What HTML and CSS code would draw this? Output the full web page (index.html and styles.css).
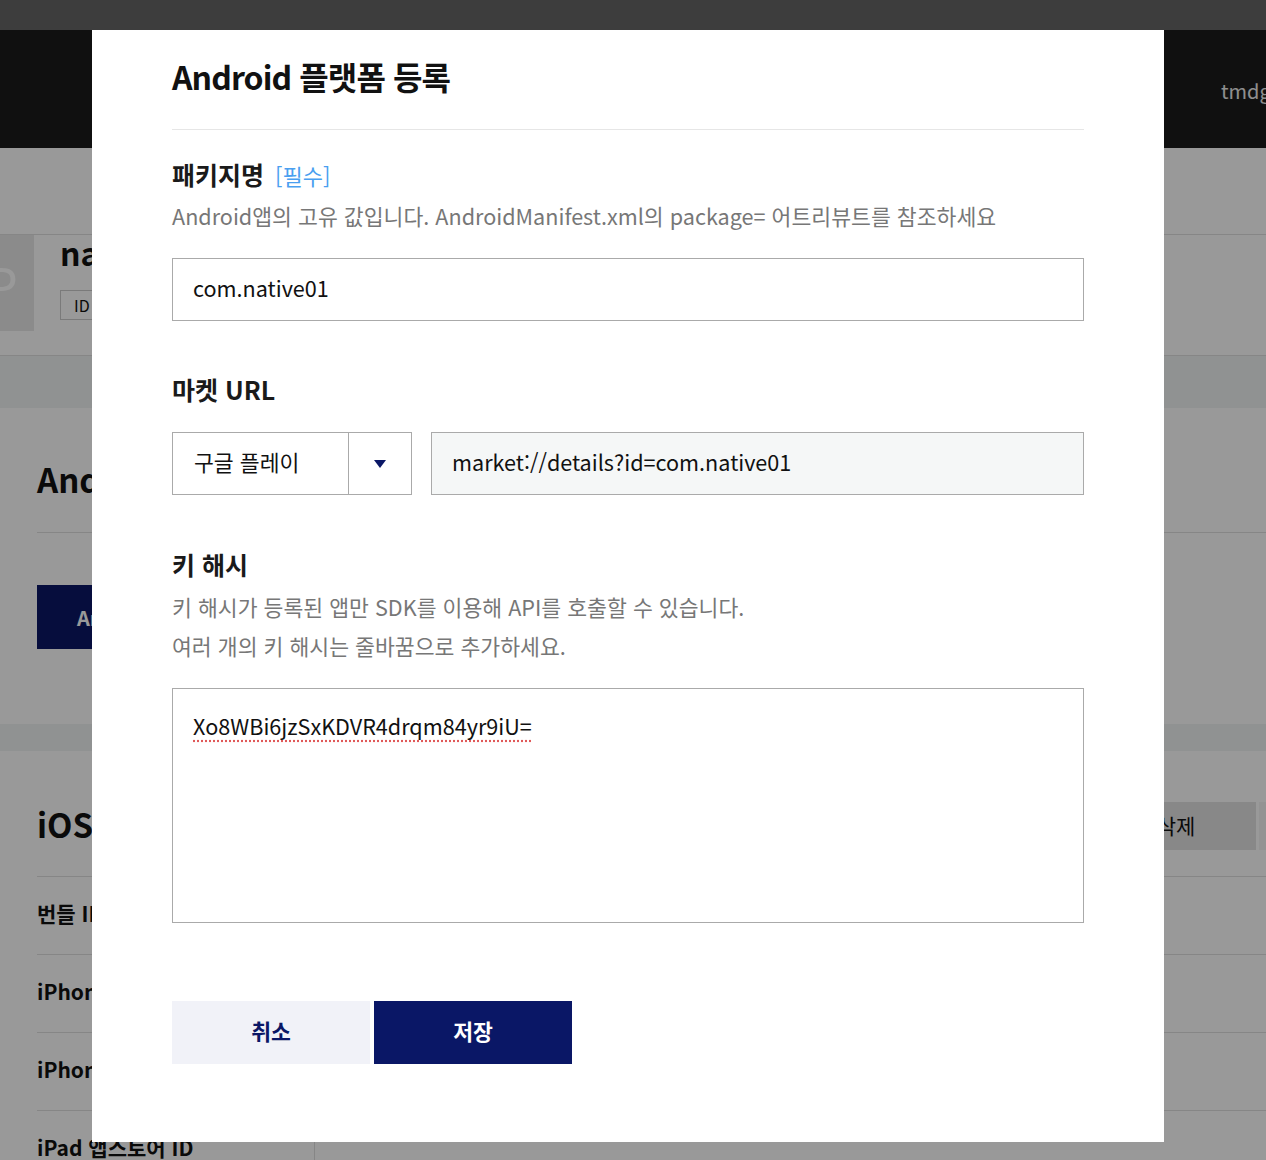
FILE: index.html
```html
<!DOCTYPE html>
<html lang="ko">
  <head>
    <meta charset="utf-8">
    <title>Android 플랫폼 등록</title>
    <link rel="stylesheet" href="styles.css">
  </head>
  <body>

    <div class="page">
      <div class="topstrip"></div>
      <div class="header">
        <span class="user">tmdgus</span>
      </div>

      <div class="app-info">
        <div class="app-icon">P</div>
        <div class="app-text">
          <div class="app-name">native01</div>
          <span class="app-id">ID 123456</span>
        </div>
      </div>
      <div class="band band-tabs"></div>

      <div class="section">
        <h2 class="section-title">Android</h2>
        <button class="btn-navy">Android 플랫폼 등록</button>
      </div>
      <div class="band"></div>

      <div class="section section-ios">
        <div class="section-head">
          <h2 class="section-title">iOS</h2>
          <div class="head-buttons">
            <button class="btn-gray">삭제</button>
            <button class="btn-light">추가</button>
          </div>
        </div>
        <div class="row"><div class="row-label">번들 ID</div><div class="row-value"></div></div>
        <div class="row"><div class="row-label">iPhone 앱스토어 ID</div><div class="row-value"></div></div>
        <div class="row"><div class="row-label">iPhone 팀 ID</div><div class="row-value"></div></div>
        <div class="row"><div class="row-label">iPad 앱스토어 ID</div><div class="row-value"></div></div>
      </div>
    </div>

    <div class="dim"></div>

    <div class="modal">
      <h1 class="modal-title">Android 플랫폼 등록</h1>

      <div class="field field-first">
        <div class="label">패키지명 <span class="required">[필수]</span></div>
        <p class="desc">Android앱의 고유 값입니다. AndroidManifest.xml의 package= 어트리뷰트를 참조하세요</p>
        <input class="text-input" type="text" value="com.native01">
      </div>

      <div class="field">
        <div class="label">마켓 URL</div>
        <div class="market-row">
          <div class="select">
            <span class="select-text">구글 플레이</span>
            <span class="select-arrow"><span class="triangle"></span></span>
          </div>
          <input class="text-input url-input" type="text" value="market://details?id=com.native01" readonly>
        </div>
      </div>

      <div class="field field-hash">
        <div class="label">키 해시</div>
        <p class="desc">키 해시가 등록된 앱만 SDK를 이용해 API를 호출할 수 있습니다.<br>여러 개의 키 해시는 줄바꿈으로 추가하세요.</p>
        <textarea class="hash-input">Xo8WBi6jzSxKDVR4drqm84yr9iU=</textarea>
      </div>

      <div class="buttons">
        <button class="btn-cancel">취소</button>
        <button class="btn-save">저장</button>
      </div>
    </div>

  </body>
</html>
```

FILE: styles.css
```css
body {
  margin: 0;
  font-family: "Noto Sans CJK KR", "Noto Sans", sans-serif;
  color: #111;
  overflow: hidden;
}

/* background page */
.page {
  width: 1266px;
  overflow: hidden;
}
.topstrip {
  height: 30px;
  background: #666;
}
.header {
  height: 118px;
  background: #1c1c1c;
  display: flex;
  align-items: center;
  padding-left: 1221px;
  overflow: hidden;
  white-space: nowrap;
}
.user {
  color: #eee;
  font-size: 20px;
  padding-top: 2px;
}
.app-info {
  margin-top: 86px;
  border-top: 1px solid #e0e0e0;
  height: 120px;
  display: flex;
}
.app-icon {
  width: 96px;
  height: 96px;
  margin-left: -62px;
  box-sizing: border-box;
  padding-right: 16px;
  background: #e8e8e8;
  color: #fff;
  font-size: 52px;
  display: flex;
  align-items: center;
  justify-content: flex-end;
}
.app-text {
  margin-left: 26px;
}
.app-name {
  font-size: 32px;
  font-weight: bold;
  line-height: 40px;
  margin-top: -3px;
}
.app-id {
  display: inline-block;
  margin-top: 18px;
  border: 1px solid #ccc;
  font-size: 16px;
  line-height: 28px;
  padding: 0 13px;
}
.band {
  height: 27px;
  background: #f1f4f3;
}
.band-tabs {
  height: 52px;
  border-top: 1px solid #e0e0e0;
}
.section {
  padding: 0 0 0 37px;
  height: 316px;
}
.section-title {
  margin: 0;
  font-size: 33px;
  line-height: 40px;
  padding-top: 51px;
  padding-bottom: 33px;
  border-bottom: 1px solid #e0e0e0;
}
.btn-navy {
  margin-top: 52px;
  height: 64px;
  width: 260px;
  border: 0;
  background: #0a1766;
  color: #fff;
  font-family: inherit;
  font-size: 20px;
  font-weight: bold;
  text-align: left;
  padding-left: 40px;
}
.section-ios {
  height: auto;
}
.section-head {
  display: flex;
  align-items: flex-start;
  justify-content: space-between;
  border-bottom: 1px solid #e0e0e0;
  padding-bottom: 26px;
  margin-right: -90px;
}
.section-ios .section-title {
  border-bottom: 0;
  padding: 53px 0 0;
}
.head-buttons {
  display: flex;
  gap: 3px;
  margin-top: 51px;
}
.btn-gray, .btn-light {
  height: 48px;
  width: 160px;
  border: 0;
  background: #e3e3e3;
  font-family: inherit;
  font-size: 21px;
  color: #111;
  padding-bottom: 3px;
}
.btn-light {
  width: 97px;
  background: #f6f6f6;
}
.row {
  display: flex;
  height: 77px;
  border-bottom: 1px solid #e0e0e0;
}
.row-label {
  width: 277px;
  border-right: 1px solid #e0e0e0;
  font-size: 21px;
  font-weight: bold;
  line-height: 72px;
}

/* overlay + modal */
.dim {
  position: fixed;
  inset: 0;
  background: rgba(0, 0, 0, 0.4);
}
.modal {
  position: fixed;
  left: 92px;
  top: 30px;
  width: 1072px;
  height: 1112px;
  box-sizing: border-box;
  padding: 0 80px;
  background: #fff;
}
.modal-title {
  margin: 0;
  font-size: 32px;
  font-weight: bold;
  line-height: 46px;
  padding: 23px 0 30px;
  border-bottom: 1px solid #e6e6e6;
  letter-spacing: -0.9px;
}
.field {
  margin-top: 52px;
}
.field-first {
  margin-top: 28px;
}
.field-hash {
  margin-top: 53px;
}
.label {
  font-size: 25px;
  font-weight: bold;
  line-height: 32px;
  color: #1a1a1a;
}
.required {
  font-size: 22px;
  font-weight: normal;
  color: #4a9ff0;
  margin-left: 4px;
}
.desc {
  margin: 5px 0 0;
  font-size: 21.6px;
  line-height: 39px;
  color: #777;
}
.field-hash .desc {
  margin-top: 7px;
}
.text-input {
  display: block;
  box-sizing: border-box;
  width: 100%;
  height: 63px;
  margin-top: 23px;
  border: 1px solid #aaa;
  padding: 0 20px 4px;
  font-family: inherit;
  font-size: 21.6px;
  color: #111;
  outline: none;
}
.market-row {
  display: flex;
  gap: 19px;
  margin-top: 27px;
}
.select {
  display: flex;
  width: 240px;
  height: 63px;
  box-sizing: border-box;
  border: 1px solid #aaa;
}
.select-text {
  flex: 1;
  font-size: 21.6px;
  line-height: 57px;
  padding-left: 21px;
  border-right: 1px solid #aaa;
}
.select-arrow {
  width: 62px;
  display: flex;
  align-items: center;
  justify-content: center;
}
.triangle {
  width: 0;
  height: 0;
  border-left: 6px solid transparent;
  border-right: 6px solid transparent;
  border-top: 8px solid #0a1766;
  margin-top: 1px;
}
.url-input {
  flex: 1;
  margin-top: 0;
  background: #f5f7f7;
}
.hash-input {
  display: block;
  box-sizing: border-box;
  width: 100%;
  height: 235px;
  margin-top: 23px;
  border: 1px solid #aaa;
  padding: 21px 20px;
  font-family: inherit;
  font-size: 21.6px;
  line-height: 32px;
  color: #111;
  resize: none;
  outline: none;
  text-decoration: underline dotted #e05a5a;
  text-underline-offset: 5px;
}
.buttons {
  display: flex;
  gap: 4px;
  margin-top: 78px;
}
.btn-cancel, .btn-save {
  width: 198px;
  height: 63px;
  border: 0;
  font-family: inherit;
  font-size: 21.6px;
  font-weight: bold;
  padding-bottom: 5px;
}
.btn-cancel {
  background: #f1f2f8;
  color: #0a1766;
}
.btn-save {
  background: #0a1766;
  color: #fff;
}
```
